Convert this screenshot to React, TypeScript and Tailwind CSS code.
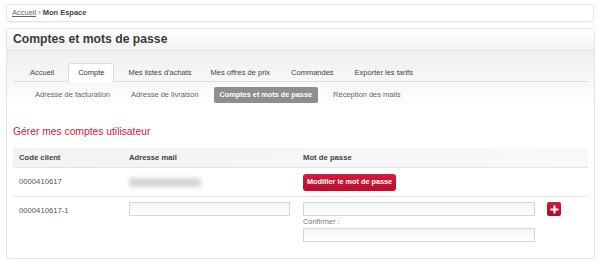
import React from "react";

const tabs = ["Accueil", "Compte", "Mes listes d'achats", "Mes offres de prix", "Commandes", "Exporter les tarifs"];
const tabMr = ["mr-[5px]", "mr-[5px]", "mr-[1px]", "mr-[3px]", "mr-[3px]", "mr-[3px]"];
const subtabs = ["Adresse de facturation", "Adresse de livraison", "Comptes et mots de passe", "Réception des mails"];

export default function App() {
  return (
    <div className="w-[600px] h-[264px] bg-white overflow-hidden text-[#555]" style={{ fontFamily: '"Liberation Sans", Arial, sans-serif' }}>
      <div className="pt-[4px] px-[6px]">
        <div className="h-[18px] border border-[#e6e6e6] rounded-[3px] flex items-center pl-[5px] text-[7.5px] shadow-[0_1px_1px_rgba(0,0,0,0.04)]">
          <span className="underline text-[#666]">Accueil</span>
          <span className="mx-[2px] text-[#777]">›</span>
          <span className="font-bold text-[#444]">Mon Espace</span>
        </div>
      </div>
      <div className="mt-[6px] mx-[6px] w-[589px] h-[231px] border border-[#e4e4e4] rounded-[3px] flex flex-col">
        <div className="h-[22px] shrink-0 bg-gradient-to-b from-white to-[#f1f1f1] border-b border-[#e2e2e2] flex items-center pl-[6px]">
          <span className="text-[12.2px] font-bold text-[#3a3a3a] leading-none">Comptes et mots de passe</span>
        </div>
        <div className="bg-gradient-to-b from-[#efefef] to-white pt-[12px] px-[6px]">
          <div className="flex border-b border-[#dcdcdc] pl-[8px] h-[19px]">
            {tabs.map((t, i) => (
              <div
                key={t}
                className={
                  (i === 1
                    ? "px-[9px] h-[19px] flex items-center text-[7.5px] text-[#333] bg-white border border-[#dcdcdc] border-b-white rounded-t-[2px] -mb-px "
                    : "px-[9px] h-[19px] flex items-center text-[7.5px] text-[#444] ") + tabMr[i]
                }
              >
                {t}
              </div>
            ))}
          </div>
          <div className="flex items-center gap-[9px] pl-[16px] h-[25px] pt-[1px]">
            {subtabs.map((t, i) => (
              <div
                key={t}
                className={
                  i === 2
                    ? "px-[6px] h-[16px] flex items-center text-[7.3px] font-bold text-white bg-[#8e8e8e] rounded-[2px]"
                    : "px-[6px] h-[16px] flex items-center text-[7.5px] text-[#666]"
                }
              >
                {t}
              </div>
            ))}
          </div>
        </div>
        <div className="px-[6px]">
          <div className="pt-[11px] h-[41px]">
            <span className="text-[10.3px] text-[#d3163c]">Gérer mes comptes utilisateur</span>
          </div>
          <div className="w-[575px]">
            <div className="flex h-[20px] items-center bg-gradient-to-r from-[#f3f3f3] to-[#f8f8f8] border-b border-[#e4e4e4] text-[7.7px] font-bold text-[#444]">
              <div className="w-[110px] pl-[6px]">Code client</div>
              <div className="w-[174px] pl-[6px]">Adresse mail</div>
              <div className="w-[244px] pl-[6px]">Mot de passe</div>
              <div className="flex-1" />
            </div>
            <div className="flex h-[29px] items-center border-b border-[#e8e8e8] text-[7.7px] text-[#555]">
              <div className="w-[110px] pl-[6px]">0000410617</div>
              <div className="w-[174px] pl-[6px]">
                <div className="w-[72px] h-[9px] bg-[#d4d4d4] rounded-[3px] blur-[2px]" />
              </div>
              <div className="w-[244px] pl-[6px]">
                <div className="inline-flex items-center h-[17px] px-[4px] rounded-[3px] bg-gradient-to-b from-[#d8193f] to-[#b50f2c] text-white font-bold text-[7.3px]">
                  Modifier le mot de passe
                </div>
              </div>
              <div className="flex-1" />
            </div>
            <div className="flex pt-[5px] text-[7.7px] text-[#555]">
              <div className="w-[110px] pl-[6px] pt-[3px]">0000410617-1</div>
              <div className="w-[174px] pl-[6px]">
                <div className="w-[161px] h-[14px] border border-[#d6d6d6] bg-gradient-to-b from-[#f4f4f4] to-white" />
              </div>
              <div className="w-[244px] pl-[6px] flex flex-col">
                <div className="w-[232px] h-[14px] border border-[#d6d6d6] bg-gradient-to-b from-[#f4f4f4] to-white" />
                <div className="h-[10px] leading-[10px] mt-[1px] text-[7.4px] text-[#777]">Confirmer :</div>
                <div className="w-[232px] h-[14px] mt-[1px] border border-[#d6d6d6] bg-gradient-to-b from-[#f4f4f4] to-white" />
              </div>
              <div className="flex-1 pl-[6px]">
                <div className="w-[14px] h-[14px] rounded-[2px] bg-gradient-to-b from-[#d01a3c] to-[#a80d28] flex items-center justify-center">
                  <svg width="9" height="9" viewBox="0 0 9 9">
                    <rect x="3.5" y="0.5" width="2" height="8" fill="white" />
                    <rect x="0.5" y="3.5" width="8" height="2" fill="white" />
                  </svg>
                </div>
              </div>
            </div>
          </div>
        </div>
      </div>
    </div>
  );
}
